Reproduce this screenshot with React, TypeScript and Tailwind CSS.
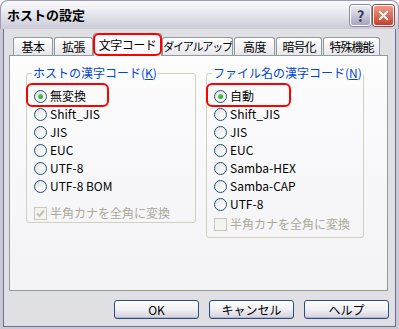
import { X } from "lucide-react";

const tabs = [
  { label: "基本", cls: "ml-[9px] w-[40px]", text: "tracking-[-0.5px]" },
  { label: "拡張", cls: "ml-[1px] w-[39px]", text: "tracking-[-0.5px]" },
  { label: "文字コード", cls: "w-[69px]", text: "tracking-[-0.5px]", active: true },
  { label: "ダイアルアップ", cls: "w-[71px]", text: "text-[11px] tracking-[-1.2px]" },
  { label: "高度", cls: "ml-[1px] w-[41px]", text: "tracking-[-0.5px]" },
  { label: "暗号化", cls: "ml-[1px] w-[46px]", text: "tracking-[-1px]" },
  { label: "特殊機能", cls: "ml-[1px] w-[57px]", text: "tracking-[-1px]" },
];

const hostCodes = ["無変換", "Shift_JIS", "JIS", "EUC", "UTF-8", "UTF-8 BOM"];
const fileCodes = ["自動", "Shift_JIS", "JIS", "EUC", "Samba-HEX", "Samba-CAP", "UTF-8"];

function Radio({ checked }: { checked?: boolean }) {
  return (
    <span className="flex h-[13px] w-[13px] shrink-0 items-center justify-center rounded-full border border-[#1c5180] bg-linear-to-br from-[#dcdcd7] via-[#f4f4f2] to-white">
      {checked && (
        <span className="h-[5px] w-[5px] rounded-full bg-linear-to-br from-[#62d862] to-[#1f9b1f]" />
      )}
    </span>
  );
}

function DisabledCheck({ checked }: { checked?: boolean }) {
  return (
    <span className="flex h-[13px] w-[13px] shrink-0 items-center justify-center border border-[#cac8bb] bg-[#f4f4f0]">
      {checked && (
        <svg width="9" height="9" viewBox="0 0 9 9">
          <path d="M1 4.5 L3.5 7 L8 1.5" fill="none" stroke="#c4c2b4" strokeWidth="2" />
        </svg>
      )}
    </span>
  );
}

function Highlight({ cls }: { cls: string }) {
  return <span className={`pointer-events-none absolute rounded-[6px] border-2 border-[#ff0000] ${cls}`} />;
}

function Group({
  title,
  hotkey,
  options,
  boxCls,
  checkCls,
  checked,
  redCls,
}: {
  title: string;
  hotkey: string;
  options: string[];
  boxCls: string;
  checkCls: string;
  checked?: boolean;
  redCls: string;
}) {
  return (
    <fieldset className={`rounded-[3px] border border-[#d0d0bf] ${boxCls}`}>
      <legend className="ml-[5px] px-[1px] text-[12px] leading-[14px] text-[#0046d5]">
        {title}(<span className="underline">{hotkey}</span>)
      </legend>
      <div className="flex flex-col pt-[7px]">
        {options.map((o, i) => (
          <div key={o} className="relative flex h-[18px] items-center gap-[3px] pl-[7px]">
            {i === 0 && <Highlight cls={redCls} />}
            <Radio checked={i === 0} />
            <span className="leading-[14px] text-black">{o}</span>
          </div>
        ))}
        <div className={`flex h-[18px] items-center gap-[3px] pl-[7px] ${checkCls}`}>
          <DisabledCheck checked={checked} />
          <span className="leading-[14px] text-[#aca899]">半角カナを全角に変換</span>
        </div>
      </div>
    </fieldset>
  );
}

function Button({ label }: { label: string }) {
  return (
    <button className="flex h-[19px] w-[85px] items-center justify-center rounded-[3px] border border-[#2b4e82] bg-linear-to-b from-white via-[#f0f0f4] to-[#d2d0de] text-[12px] leading-[14px] text-black shadow-[inset_0_-1px_0_#b8b6c8]">
      {label}
    </button>
  );
}

export default function App() {
  return (
    <div className="h-[329px] w-[399px] overflow-hidden bg-white font-['Noto_Sans_CJK_JP',sans-serif] text-[12px]">
      <div className="flex h-full flex-col rounded-t-[8px] bg-[#c9c9d6]">
        {/* title bar */}
        <div className="flex h-[29px] shrink-0 items-center rounded-t-[8px] border border-b-0 border-[#9c9cb4] bg-linear-to-b from-[#fbfbfd] via-[#e4e4ec] to-[#cbcbd8] pl-[6px] pr-[4px]">
          <span className="text-[13px] font-bold leading-[16px] text-black">ホストの設定</span>
          <div className="ml-auto flex gap-[2px]">
            <span className="flex h-[21px] w-[21px] items-center justify-center rounded-[3px] border border-white bg-linear-to-b from-[#ececf4] to-[#a4a4bc] text-[15px] font-bold leading-none text-[#3c3c5c] shadow-[0_0_0_1px_#8a8aa4]">
              ?
            </span>
            <span className="flex h-[21px] w-[21px] items-center justify-center rounded-[3px] border border-white bg-linear-to-b from-[#f29a88] to-[#c63c28] shadow-[0_0_0_1px_#9a4a44]">
              <X size={15} strokeWidth={3.2} color="#ffffff" />
            </span>
          </div>
        </div>
        {/* client area */}
        <div className="mx-[3px] mb-[2px] flex flex-1 flex-col border-x border-b border-[#6e6e90] bg-[#e0dfe3] pt-[4px]">
          <div className="flex h-[22px] items-end">
            {tabs.map((t) =>
              t.active ? (
                <div
                  key={t.label}
                  className={`relative z-10 -mb-px flex h-[23px] items-center justify-center rounded-t-[3px] border border-b-0 border-[#919b9c] bg-[#fcfcfe] ${t.cls}`}
                >
                  <Highlight cls="-left-[1px] -top-[1px] h-[23px] w-[69px]" />
                  <span className={`whitespace-nowrap ${t.text}`}>{t.label}</span>
                </div>
              ) : (
                <div
                  key={t.label}
                  className={`flex h-[18px] items-center justify-center overflow-hidden rounded-t-[3px] border border-b-0 border-[#919b9c] bg-linear-to-b from-white to-[#e6e6ec] ${t.cls}`}
                >
                  <span className={`whitespace-nowrap ${t.text}`}>{t.label}</span>
                </div>
              )
            )}
          </div>
          <div className="ml-[5px] flex h-[236px] w-[379px] items-start border border-[#919b9c] bg-linear-to-b from-[#fdfdfe] to-[#f3f3f6] pl-[16px] pt-[10px]">
            <Group
              title="ホストの漢字コード"
              hotkey="K"
              options={hostCodes}
              boxCls="h-[157px] w-[170px]"
              checkCls="mt-[9px]"
              checked
              redCls="-left-[1px] -top-[4px] h-[24px] w-[83px]"
            />
            <Group
              title="ファイル名の漢字コード"
              hotkey="N"
              options={fileCodes}
              boxCls="ml-[10px] h-[172px] w-[158px]"
              checkCls="mt-[2px]"
              redCls="-left-[1px] -top-[4px] h-[24px] w-[85px]"
            />
          </div>
          <div className="mr-[6px] mt-[9px] flex justify-end gap-[10px]">
            <Button label="OK" />
            <Button label="キャンセル" />
            <Button label="ヘルプ" />
          </div>
        </div>
      </div>
    </div>
  );
}
